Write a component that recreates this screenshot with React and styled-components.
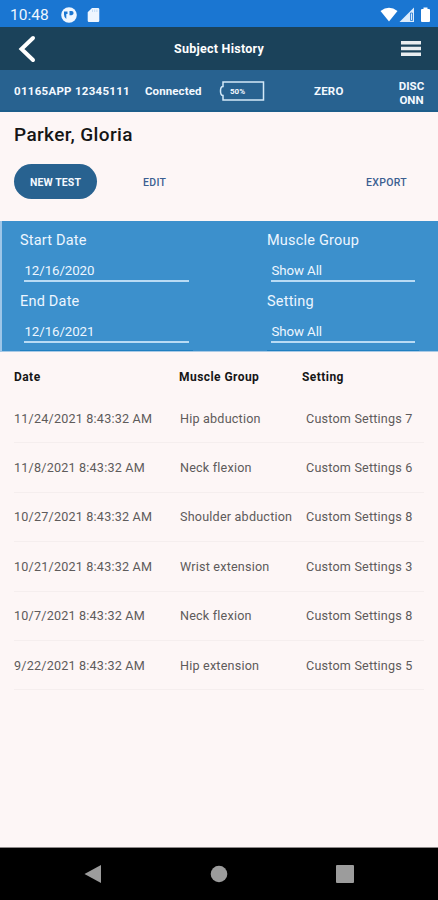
import React from 'react';
import styled, { createGlobalStyle } from 'styled-components';

const GlobalStyle = createGlobalStyle`
  * {
    box-sizing: border-box;
  }
  body {
    margin: 0;
    background: #fdf6f6;
  }
  button {
    font-family: inherit;
    border: none;
    background: none;
    padding: 0;
  }
  svg {
    display: block;
    flex: none;
  }
`;

const Screen = styled.div`
  width: 438px;
  height: 900px;
  display: flex;
  flex-direction: column;
  overflow: hidden;
  background: #fdf6f6;
  color: #161616;
  font-family: Roboto, "Liberation Sans", sans-serif;
  white-space: nowrap;
`;

const StatusBar = styled.div`
  height: 27px;
  flex: none;
  display: flex;
  align-items: center;
  padding: 2px 7px 0 10px;
  background: #1a76d2;
  color: #eef6ff;
`;

const Clock = styled.span`
  width: 51px;
  font-size: 15.5px;
  line-height: 20px;
`;

const StatusIcons = styled.div`
  display: flex;
  align-items: center;
  gap: ${({ $gap }) => $gap}px;
  margin-left: ${({ $end }) => ($end ? 'auto' : 0)};
`;

const Header = styled.header`
  height: 43px;
  flex: none;
  display: grid;
  grid-template-columns: 60px 1fr 60px;
  align-items: center;
  background: #1b425a;
`;

const HeaderTitle = styled.h1`
  margin: 0;
  text-align: center;
  color: #ffffff;
  font-size: 12.5px;
  font-weight: 700;
  letter-spacing: 0.25px;
`;

const HeaderButton = styled.button`
  display: flex;
  justify-content: ${({ $end }) => ($end ? 'flex-end' : 'flex-start')};
  padding: ${({ $end }) => ($end ? '0 17px 0 0' : '0 0 0 18px')};
`;

const DeviceBar = styled.div`
  height: 42px;
  flex: none;
  display: grid;
  grid-template-columns: 131px 74px 95px 84px 27px;
  align-items: center;
  padding: 2px 0 0 14px;
  background: #286290;
  border-bottom: 2px solid #1d5e8b;
  color: #f4f9ff;
  font-size: 11.5px;
  font-weight: 700;
`;

const DeviceText = styled.span`
  letter-spacing: ${({ $spacing }) => $spacing || 0}px;
`;

const Battery = styled.div`
  width: 46px;
  height: 20px;
  display: grid;

  > * {
    grid-area: 1 / 1;
  }
`;

const BatteryLevel = styled.span`
  padding-left: 11px;
  font-size: 8px;
  line-height: 21px;
`;

const Disconnect = styled.button`
  width: 27px;
  height: 28px;
  margin-top: 3px;
  color: inherit;
  font-size: 11.5px;
  font-weight: 700;
  line-height: 14px;
  text-align: center;
  white-space: normal;
  word-break: break-all;
`;

const Subject = styled.section`
  height: 109px;
  flex: none;
  padding: 11px 14px 0;
`;

const SubjectName = styled.h2`
  margin: 0;
  font-size: 19px;
  font-weight: 500;
  line-height: 24px;
  letter-spacing: 0.38px;
`;

const Actions = styled.div`
  display: flex;
  align-items: center;
  margin-top: 17px;
`;

const PrimaryButton = styled.button`
  width: 83px;
  height: 35px;
  padding-top: 2px;
  border-radius: 18px;
  background: #286290;
  color: #f4f9ff;
  font-size: 10.5px;
  font-weight: 700;
  letter-spacing: 0.1px;
`;

const TextButton = styled.button`
  margin-left: ${({ $end }) => ($end ? 'auto' : '46px')};
  margin-right: ${({ $end }) => ($end ? '17px' : 0)};
  padding-top: 2px;
  color: #3b5f91;
  font-size: 10.5px;
  font-weight: 500;
  letter-spacing: 0.3px;
`;

const Filters = styled.section`
  height: 131px;
  flex: none;
  display: grid;
  grid-template-columns: 173px 152px;
  column-gap: 74px;
  grid-template-rows: 61px 61px 2px;
  padding: 6px 0 0 18px;
  border-left: 2px solid #9dc6e8;
  border-bottom: 1px solid #a9cae6;
  background: #3c90cc;
  color: #edf6ff;
`;

const Field = styled.div`
  display: flex;
  flex-direction: column;
`;

const FieldLabel = styled.label`
  padding-top: 1px;
  font-size: 14.5px;
  line-height: 25px;
  letter-spacing: 0.2px;
`;

const FieldValue = styled.div`
  height: 29px;
  margin: 0 4px;
  padding-top: 7px;
  padding-left: 0.5px;
  border-bottom: 2px solid #b9dbf4;
  font-size: 13.3px;
  line-height: 22px;
  letter-spacing: -0.1px;
`;

const FieldShadow = styled.div`
  height: 1px;
  align-self: end;
  background: #1f7fc0;
`;

const History = styled.section`
  flex: 1;
  padding: 0 14px;
`;

const HistoryHead = styled.div`
  height: 42px;
  display: grid;
  grid-template-columns: 165px 123px 1fr;
  padding-top: 16px;
  font-size: 12px;
  font-weight: 700;
  line-height: 18px;
  letter-spacing: 0.45px;
`;

const HistoryRow = styled.div`
  height: 49.4px;
  display: grid;
  grid-template-columns: 166px 126px 1fr;
  align-items: center;
  border-bottom: 1px solid #f5eeee;
  color: #5e5b5b;
  font-size: 12.6px;
  letter-spacing: 0.2px;
`;

const NavBar = styled.nav`
  height: 53px;
  flex: none;
  display: grid;
  grid-template-columns: 126px 126px 126px;
  justify-content: center;
  justify-items: center;
  align-items: center;
  border-top: 1px solid #8d8989;
  background: #000000;
`;

const rows = [
  ['11/24/2021 8:43:32 AM', 'Hip abduction', 'Custom Settings 7'],
  ['11/8/2021 8:43:32 AM', 'Neck flexion', 'Custom Settings 6'],
  ['10/27/2021 8:43:32 AM', 'Shoulder abduction', 'Custom Settings 8'],
  ['10/21/2021 8:43:32 AM', 'Wrist extension', 'Custom Settings 3'],
  ['10/7/2021 8:43:32 AM', 'Neck flexion', 'Custom Settings 8'],
  ['9/22/2021 8:43:32 AM', 'Hip extension', 'Custom Settings 5'],
];

const filters = [
  ['Start Date', '12/16/2020'],
  ['Muscle Group', 'Show All'],
  ['End Date', '12/16/2021'],
  ['Setting', 'Show All'],
];

export default function App() {
  return (
    <Screen>
      <GlobalStyle />
      <StatusBar>
        <Clock>10:48</Clock>
        <StatusIcons $gap={10}>
          <svg width="16" height="16" viewBox="0 0 16 16">
            <circle cx="8" cy="8" r="7.8" fill="#eef6ff" />
            <path d="M3 4.500h3.500v2.500H5.300v5Q3 10.500 3 7.500z" fill="#1a76d2" />
            <path d="M8.500 4h2a2 2 0 0 1 0 4.200h-2z" fill="#1a76d2" />
          </svg>
          <svg width="13" height="16" viewBox="0 0 13 16">
            <path d="M5 1h6a1.300 1.300 0 0 1 1.300 1.300v11.400a1.300 1.300 0 0 1-1.300 1.300H2a1.300 1.300 0 0 1-1.300-1.300V5.300z" fill="#eef6ff" />
            <path d="M5.500 2.500v2.500M7.700 2.500v2.500M9.900 2.500v2.500" stroke="#b5d3f2" strokeWidth="0.8" />
          </svg>
        </StatusIcons>
        <StatusIcons $gap={1} $end>
          <svg width="18" height="16" viewBox="0 0 18 16">
            <path d="M0.500 4Q9-2.500 17.500 4L9 14.500z" fill="#ffffff" />
          </svg>
          <svg width="16" height="16" viewBox="0 0 16 16">
            <path d="M15 0.500V15H0.500z" fill="#dcecfc" />
            <path d="M11.500 6v7.500h2V6z" stroke="#1a76d2" strokeWidth="0.8" fill="none" />
          </svg>
          <svg width="15" height="16" viewBox="0 0 15 16">
            <path d="M7.500 0.500h4v1.500h1.500a1 1 0 0 1 1 1v11a1 1 0 0 1-1 1h-7a1 1 0 0 1-1-1V3a1 1 0 0 1 1-1h1.500z" fill="#ffffff" />
          </svg>
        </StatusIcons>
      </StatusBar>

      <Header>
        <HeaderButton aria-label="Back">
          <svg width="19" height="28" viewBox="0 0 19 28">
            <path d="M15 3L3.500 14L15 25" fill="none" stroke="#ffffff" strokeWidth="4" strokeLinecap="round" />
          </svg>
        </HeaderButton>
        <HeaderTitle>Subject History</HeaderTitle>
        <HeaderButton $end aria-label="Menu">
          <svg width="20" height="15" viewBox="0 0 20 15">
            <path d="M0 1.800h20M0 7.500h20M0 13.200h20" stroke="#e9edf0" strokeWidth="3.500" />
          </svg>
        </HeaderButton>
      </Header>

      <DeviceBar>
        <DeviceText $spacing={0.28}>01165APP 12345111</DeviceText>
        <DeviceText $spacing={0.1}>Connected</DeviceText>
        <Battery>
          <svg width="46" height="20" viewBox="0 0 46 20">
            <path d="M4 1h40.500v18H4v-4.500Q1.500 14.500 1.500 10T4 5.500z" fill="none" stroke="#d3e9f8" strokeWidth="1.500" />
          </svg>
          <BatteryLevel>50%</BatteryLevel>
        </Battery>
        <DeviceText $spacing={0.2}>ZERO</DeviceText>
        <Disconnect>DISCONN</Disconnect>
      </DeviceBar>

      <Subject>
        <SubjectName>Parker, Gloria</SubjectName>
        <Actions>
          <PrimaryButton>NEW TEST</PrimaryButton>
          <TextButton>EDIT</TextButton>
          <TextButton $end>EXPORT</TextButton>
        </Actions>
      </Subject>

      <Filters>
        {filters.map(([label, value]) => (
          <Field key={label}>
            <FieldLabel>{label}</FieldLabel>
            <FieldValue>{value}</FieldValue>
          </Field>
        ))}
        <FieldShadow />
        <FieldShadow />
      </Filters>

      <History>
        <HistoryHead>
          <span>Date</span>
          <span>Muscle Group</span>
          <span>Setting</span>
        </HistoryHead>
        {rows.map(([date, muscle, setting]) => (
          <HistoryRow key={date}>
            <span>{date}</span>
            <span>{muscle}</span>
            <span>{setting}</span>
          </HistoryRow>
        ))}
      </History>

      <NavBar>
        <svg width="18" height="18" viewBox="0 0 18 18">
          <path d="M0.500 9L17 0v18z" fill="#9c9c9c" />
        </svg>
        <svg width="18" height="18" viewBox="0 0 18 18">
          <circle cx="9" cy="9" r="8.300" fill="#9c9c9c" />
        </svg>
        <svg width="18" height="18" viewBox="0 0 18 18">
          <rect width="18" height="18" rx="1" fill="#9c9c9c" />
        </svg>
      </NavBar>
    </Screen>
  );
}
